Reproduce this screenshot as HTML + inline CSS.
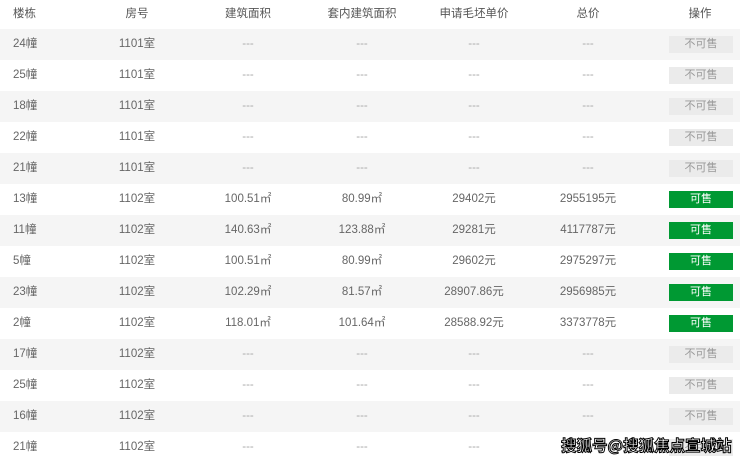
<!DOCTYPE html>
<html><head><meta charset="utf-8"><style>
body{margin:0;width:740px;height:462px;overflow:hidden;background:#fff;font-family:"Liberation Sans","Noto Sans CJK SC",sans-serif;font-size:11.5px;color:#666;position:relative}
.r{position:absolute;left:0;width:740px;height:31px}
.g{background:#f5f5f5}
.c{position:absolute;top:0;line-height:31px;white-space:nowrap;transform:translateX(-50%)}
.c0{left:13px;transform:none}
.b{position:absolute;left:669px;top:7px;width:64px;height:17px;line-height:17px;text-align:center;font-size:11px}
.n{background:#ebebeb;color:#999}
.y{background:#009933;color:#fff}
.h{height:29px}.h .c{line-height:29px;color:#555}
.d{color:#aaa}
.wm{position:absolute;left:561px;top:435px;font-size:15.5px;font-weight:bold;color:#fff;-webkit-text-stroke:1px #000;white-space:nowrap;line-height:20px;font-family:"Noto Sans CJK SC",sans-serif}
</style></head><body>
<div class="r h" style="top:0"><span class="c c0">楼栋</span><span class="c" style="left:137px">房号</span><span class="c" style="left:248px">建筑面积</span><span class="c" style="left:362px">套内建筑面积</span><span class="c" style="left:474px">申请毛坯单价</span><span class="c" style="left:588px">总价</span><span class="c" style="left:700px">操作</span></div>
<div id="rows"></div>
<script>
var d=[["24幢","1101室","---","---","---","---",0],["25幢","1101室","---","---","---","---",0],["18幢","1101室","---","---","---","---",0],["22幢","1101室","---","---","---","---",0],["21幢","1101室","---","---","---","---",0],["13幢","1102室","100.51㎡","80.99㎡","29402元","2955195元",1],["11幢","1102室","140.63㎡","123.88㎡","29281元","4117787元",1],["5幢","1102室","100.51㎡","80.99㎡","29602元","2975297元",1],["23幢","1102室","102.29㎡","81.57㎡","28907.86元","2956985元",1],["2幢","1102室","118.01㎡","101.64㎡","28588.92元","3373778元",1],["17幢","1102室","---","---","---","---",0],["25幢","1102室","---","---","---","---",0],["16幢","1102室","---","---","---","---",0],["21幢","1102室","---","---","---","---",0]];
var x=[137,248,362,474,588],h="";
d.forEach(function(r,i){h+='<div class="r'+(i%2==0?' g':'')+'" style="top:'+(29+31*i)+'px"><span class="c c0">'+r[0]+'</span>';for(var k=0;k<5;k++)h+='<span class="c'+(r[k+1]=='---'?' d':'')+'" style="left:'+x[k]+'px">'+r[k+1]+'</span>';h+='<div class="b '+(r[6]?'y">可售':'n">不可售')+'</div></div>';});
document.getElementById('rows').innerHTML=h;
</script>
<div class="wm">搜狐号@搜狐焦点宣城站</div>
</body></html>
